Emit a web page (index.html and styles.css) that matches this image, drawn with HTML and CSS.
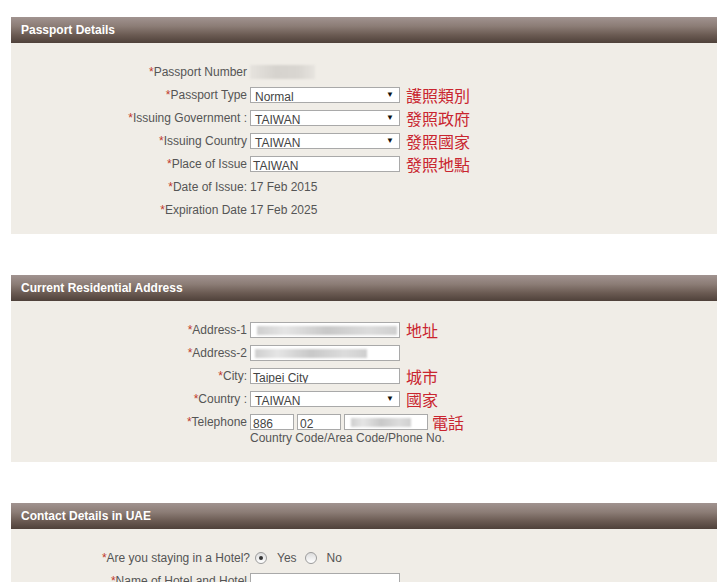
FILE: index.html
```html
<!DOCTYPE html>
<html>
<head>
<meta charset="utf-8">
<link rel="stylesheet" href="styles.css">
</head>
<body>
<div class="page">
  <section class="panel">
    <div class="panel-head">Passport Details</div>
    <div class="panel-body">
      <div class="row"><label class="lbl"><span class="req">*</span>Passport Number</label><div class="fld"><span class="blurval"></span></div></div>
      <div class="row"><label class="lbl"><span class="req">*</span>Passport Type</label><div class="fld"><div class="sel">Normal<span class="arr">▼</span></div><span class="note">護照類別</span></div></div>
      <div class="row"><label class="lbl"><span class="req">*</span>Issuing Government :</label><div class="fld"><div class="sel">TAIWAN<span class="arr">▼</span></div><span class="note">發照政府</span></div></div>
      <div class="row"><label class="lbl"><span class="req">*</span>Issuing Country</label><div class="fld"><div class="sel">TAIWAN<span class="arr">▼</span></div><span class="note">發照國家</span></div></div>
      <div class="row"><label class="lbl"><span class="req">*</span>Place of Issue</label><div class="fld"><div class="inp">TAIWAN</div><span class="note">發照地點</span></div></div>
      <div class="row"><label class="lbl"><span class="req">*</span>Date of Issue:</label><div class="fld"><span class="val">17 Feb 2015</span></div></div>
      <div class="row"><label class="lbl"><span class="req">*</span>Expiration Date</label><div class="fld"><span class="val">17 Feb 2025</span></div></div>
    </div>
  </section>

  <section class="panel">
    <div class="panel-head">Current Residential Address</div>
    <div class="panel-body">
      <div class="row"><label class="lbl"><span class="req">*</span>Address-1</label><div class="fld"><div class="inp"><span class="blur b1"></span></div><span class="note">地址</span></div></div>
      <div class="row"><label class="lbl"><span class="req">*</span>Address-2</label><div class="fld"><div class="inp"><span class="blur b2"></span></div></div></div>
      <div class="row"><label class="lbl"><span class="req">*</span>City:</label><div class="fld"><div class="inp">Taipei City</div><span class="note">城市</span></div></div>
      <div class="row"><label class="lbl"><span class="req">*</span>Country :</label><div class="fld"><div class="sel">TAIWAN<span class="arr">▼</span></div><span class="note">國家</span></div></div>
      <div class="row"><label class="lbl"><span class="req">*</span>Telephone</label><div class="fld"><div class="inp small">886</div><div class="inp small">02</div><div class="inp phone"><span class="blur b3"></span></div><span class="note tight">電話</span></div></div>
      <div class="hint">Country Code/Area Code/Phone No.</div>
    </div>
  </section>

  <section class="panel">
    <div class="panel-head">Contact Details in UAE</div>
    <div class="panel-body">
      <div class="row"><label class="lbl wide"><span class="req">*</span>Are you staying in a Hotel?</label><div class="fld radios"><span class="radio on"></span><span class="rtext">Yes</span><span class="radio"></span><span class="rtext">No</span></div></div>
      <div class="row"><label class="lbl"><span class="req">*</span>Name of Hotel and Hotel</label><div class="fld"><div class="inp"></div></div></div>
    </div>
  </section>
</div>
</body>
</html>
```

FILE: styles.css
```css
* { box-sizing: border-box; }
html, body { margin: 0; padding: 0; background: #fff; }
body {
  font-family: "Liberation Sans", Arial, sans-serif;
  font-size: 12px;
  color: #555;
}
.page {
  padding: 17px 8px 0 11px;
  display: flex;
  flex-direction: column;
  gap: 41px;
}
.panel { width: 706px; }
.panel-head {
  height: 26px;
  line-height: 26px;
  padding-left: 10px;
  color: #fff;
  font-weight: bold;
  font-size: 12px;
  background: linear-gradient(#a19390 0%, #8c7d76 35%, #6a5a52 70%, #4f413a 100%);
}
.panel-body {
  background: #f0ede7;
  padding: 17px 0 13px 0;
}
.panel:nth-child(2) .panel-body { padding-bottom: 17px; }
.row {
  display: grid;
  grid-template-columns: 239px 1fr;
  align-items: center;
  height: 23px;
}
.lbl {
  text-align: right;
  padding-right: 3px;
  white-space: nowrap;
}
.lbl.wide { margin-right: -3px; }
.req { color: #c0392b; }
.fld {
  display: flex;
  align-items: center;
  gap: 3px;
}
.blurval {
  width: 65px;
  height: 14px;
  background: linear-gradient(90deg, #e6e3de, #d6d3ce 40%, #d9d6d1 75%, #e7e4df);
  filter: blur(1px);
}
.sel, .inp {
  position: relative;
  width: 150px;
  height: 16px;
  background: #fff;
  border: 1px solid #a9a9a9;
  color: #444;
  font-size: 12px;
  line-height: 16px;
  padding: 1px 0 0 4px;
  overflow: hidden;
  white-space: nowrap;
}
.inp { padding-left: 2px; padding-top: 2px; line-height: 14px; }
.arr {
  position: absolute;
  right: 5px;
  top: 0;
  font-size: 8px;
  color: #111;
  line-height: 14px;
}
.inp.small { width: 44px; }
.inp.phone { width: 84px; }
.note {
  margin-left: 3px;
  color: #c9252f;
  font-family: "Noto Sans CJK TC", sans-serif;
  font-size: 16px;
  line-height: 16px;
}
.note.tight { margin-left: 1px; }
.blur {
  position: absolute;
  top: 3px;
  height: 9px;
  background: linear-gradient(90deg, #cfcfcf, #e5e5e5 20%, #c8c8c8 50%, #dcdcdc 80%, #cfcfcf);
  filter: blur(1px);
}
.b1 { left: 6px; width: 140px; }
.b2 { left: 4px; width: 112px; }
.b3 { left: 6px; width: 60px; }
.hint {
  padding-left: 239px;
  margin-top: -2px;
  line-height: 14px;
}
.radios { gap: 0; padding-left: 5px; }
.radio {
  width: 12px;
  height: 12px;
  border-radius: 50%;
  border: 1px solid #9c9c9c;
  background: linear-gradient(#dcdcdc, #fff);
  position: relative;
}
.radio.on::after {
  content: "";
  position: absolute;
  left: 3px;
  top: 3px;
  width: 4px;
  height: 4px;
  border-radius: 50%;
  background: #333;
}
.rtext { margin: 0 8px 0 10px; }
```
